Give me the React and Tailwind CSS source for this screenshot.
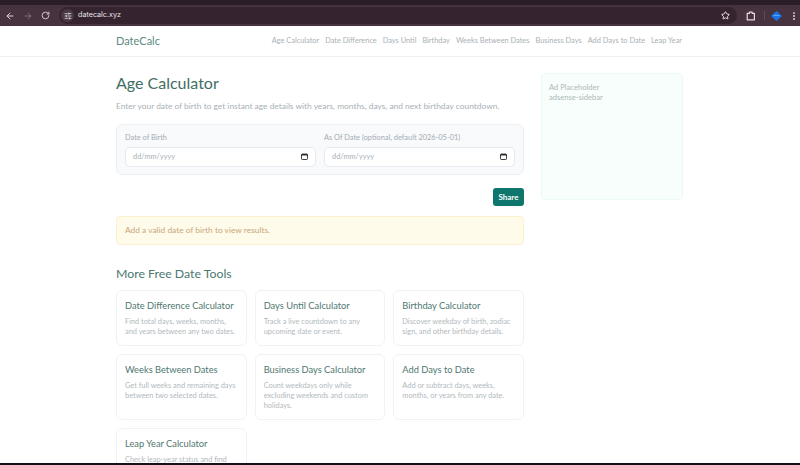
import { ArrowLeft, ArrowRight, RotateCw, SlidersHorizontal, Star, EllipsisVertical } from "lucide-react";

const NAV = ["Age Calculator", "Date Difference", "Days Until", "Birthday", "Weeks Between Dates", "Business Days", "Add Days to Date", "Leap Year"];

const TOOLS = [
  { title: "Date Difference Calculator", text: "Find total days, weeks, months, and years between any two dates." },
  { title: "Days Until Calculator", text: "Track a live countdown to any upcoming date or event." },
  { title: "Birthday Calculator", text: "Discover weekday of birth, zodiac sign, and other birthday details." },
  { title: "Weeks Between Dates", text: "Get full weeks and remaining days between two selected dates." },
  { title: "Business Days Calculator", text: "Count weekdays only while excluding weekends and custom holidays." },
  { title: "Add Days to Date", text: "Add or subtract days, weeks, months, or years from any date." },
  { title: "Leap Year Calculator", text: "Check leap-year status and find nearby leap years." },
];

function CalendarGlyph() {
  return (
    <svg width="7" height="7" viewBox="0 0 8 8" className="shrink-0">
      <rect x="0.6" y="1.2" width="6.8" height="6.2" rx="0.8" fill="none" stroke="#222" strokeWidth="1" />
      <rect x="0.6" y="1.2" width="6.8" height="1.6" fill="#222" />
    </svg>
  );
}

function ExtensionGlyph() {
  return (
    <svg width="10" height="10" viewBox="0 0 10 10" className="ml-[9px] shrink-0">
      <path d="M1.2 2.4H3.4V1.2H6.2V2.4H8.4V8.8H1.2Z" fill="none" stroke="#e2dce0" strokeWidth="1.2" strokeLinejoin="round" />
    </svg>
  );
}

function ProfileDiamond() {
  return (
    <svg width="11" height="10" viewBox="0 0 11 10" className="ml-[6px] shrink-0">
      <path d="M5.5 0L11 5L5.5 10L0 5Z" fill="#1a73e8" />
      <path d="M2 5H9L7.9 3.9H3.1Z" fill="#5aa9f5" />
    </svg>
  );
}

function DateField({ label }) {
  return (
    <div className="flex-1 min-w-0">
      <div className="text-[7.4px] leading-[10px] text-[#a3acb3] mb-[3.5px]">{label}</div>
      <div className="h-[20px] flex items-center justify-between pl-[7px] pr-[7px] bg-white border border-[#e6eaee] rounded-[5px]">
        <span className="text-[7.4px] text-[#a8b0b6]">dd/mm/yyyy</span>
        <CalendarGlyph />
      </div>
    </div>
  );
}

function ToolCard({ title, text }) {
  return (
    <div className="bg-white border border-[#f0f2f4] rounded-[6px] px-[8px] pt-[8px] pb-[7.7px]">
      <div className="text-[9.3px] leading-[14px] text-[#4f7770] mb-[3.9px] whitespace-nowrap">{title}</div>
      <div className="text-[7.4px] leading-[10.2px] text-[#b2b9be]">{text}</div>
    </div>
  );
}

export default function App() {
  return (
    <div className="relative h-[465px] w-[800px] overflow-hidden bg-white font-['Lato',sans-serif]">
      {/* browser chrome */}
      <div className="h-[26px] bg-[#47333f] border-t-[5px] border-[#2b1c29] flex items-center">
        <div className="flex items-center gap-[8px] pl-[5px] text-[#d9d2d8]">
          <ArrowLeft size={10} strokeWidth={2.4} />
          <ArrowRight size={10} strokeWidth={2.4} className="text-[#7d6c79]" />
          <RotateCw size={9} strokeWidth={2.4} />
        </div>
        <div className="ml-[9px] h-[17px] w-[678px] rounded-full bg-[#35242f] flex items-center">
          <div className="w-[13px] h-[13px] ml-[2px] rounded-full bg-[#4a3848] flex items-center justify-center text-[#e3dde2]">
            <SlidersHorizontal size={8} strokeWidth={2.4} />
          </div>
          <span className="ml-[4px] text-[7.2px] font-['Inter',sans-serif] text-[#e8e3e7]">datecalc.xyz</span>
          <Star size={9} strokeWidth={2.6} className="ml-auto mr-[7px] text-[#ece8eb]" />
        </div>
        <ExtensionGlyph />
        <div className="ml-[8px] w-px h-[9px] bg-[#5c4a58]" />
        <ProfileDiamond />
        <EllipsisVertical size={10} strokeWidth={2.6} className="ml-[7px] text-[#e2dce0]" />
      </div>

      {/* site header */}
      <header className="h-[31px] border-b border-[#eef0f2] flex items-center justify-between pl-[116px] pr-[118px]">
        <span className="text-[11px] text-[#5d8a80]">DateCalc</span>
        <nav className="flex gap-[6px] text-[7.4px] text-[#aab1b6] whitespace-nowrap">
          {NAV.map((item) => (
            <span key={item}>{item}</span>
          ))}
        </nav>
      </header>

      {/* page body */}
      <div className="flex items-start gap-[17px] pl-[116px] pt-[16px]">
        <main className="w-[408px] shrink-0">
          <h1 className="text-[16px] leading-[20px] text-[#3f6e65]">Age Calculator</h1>
          <p className="mt-[7px] text-[8.4px] leading-[12px] text-[#a8b0b6] whitespace-nowrap">
            Enter your date of birth to get instant age details with years, months, days, and next birthday countdown.
          </p>

          <div className="mt-[12px] h-[51px] bg-[#f8fafb] border border-[#eef1f3] rounded-[6px] px-[8px] pt-[8px] flex gap-[8px]">
            <DateField label="Date of Birth" />
            <DateField label="As Of Date (optional, default 2026-05-01)" />
          </div>

          <div className="mt-[13px] flex justify-end">
            <button className="h-[18px] w-[31px] rounded-[3px] bg-[#0f766e] text-[8px] font-bold text-white">Share</button>
          </div>

          <div className="mt-[10px] h-[29px] flex items-center px-[8px] bg-[#fffbeb] border border-[#fdf1cf] rounded-[4px] text-[8.4px] text-[#c8a67a]">
            Add a valid date of birth to view results.
          </div>

          <h2 className="mt-[21px] text-[12.3px] leading-[16px] text-[#4a7770]">More Free Date Tools</h2>

          <div className="mt-[8px] grid grid-cols-3 gap-[8px]">
            {TOOLS.map((tool) => (
              <ToolCard key={tool.title} title={tool.title} text={tool.text} />
            ))}
          </div>
        </main>

        <aside className="w-[142px] h-[127px] shrink-0 bg-[#f7fefc] border border-dotted border-[#dcf5ee] rounded-[5px] px-[7px] pt-[8px] text-[7.6px] leading-[10px] text-[#aeb9b7]">
          <div>Ad Placeholder</div>
          <div>adsense-sidebar</div>
        </aside>
      </div>

      {/* bottom edge of the captured window */}
      <div className="absolute bottom-0 left-0 right-0 h-[2px] bg-[#15101a]" />
    </div>
  );
}
